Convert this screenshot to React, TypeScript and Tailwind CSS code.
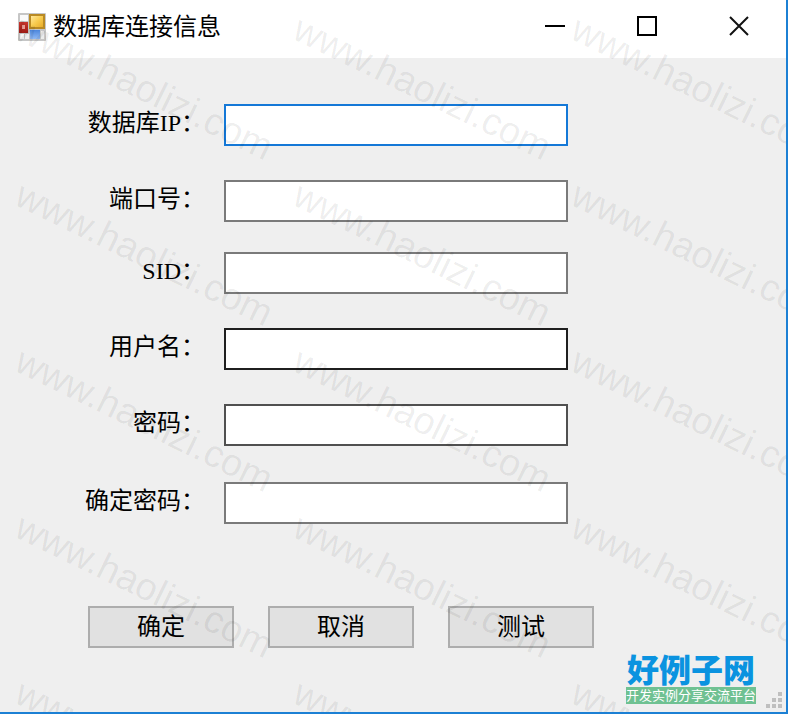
import { useState } from 'react'
import { clsx } from 'clsx'

const FIELDS = [
  { id: 'ip', label: '数据库IP：', type: 'text', space: '', border: 'border-[#1478d7]' },
  { id: 'port', label: '端口号：', type: 'text', space: 'mt-[34px]', border: 'border-[#7a7a7a]' },
  { id: 'sid', label: 'SID：', type: 'text', space: 'mt-[30px]', border: 'border-[#7a7a7a]' },
  { id: 'user', label: '用户名：', type: 'text', space: 'mt-[34px]', border: 'border-[#1f1f1f]' },
  { id: 'password', label: '密码：', type: 'password', space: 'mt-[34px]', border: 'border-[#505050]' },
  { id: 'confirm', label: '确定密码：', type: 'password', space: 'mt-[36px]', border: 'border-[#7a7a7a]' },
]

const ACTIONS = ['确定', '取消', '测试']

function AppIcon() {
  return (
    <svg width="30" height="30" viewBox="0 0 30 30" aria-hidden="true">
      <defs>
        <linearGradient id="gold" x1="0" y1="0" x2="1" y2="1">
          <stop offset="0" stopColor="#ffe79a" />
          <stop offset="0.5" stopColor="#f8cc50" />
          <stop offset="1" stopColor="#e8ac28" />
        </linearGradient>
        <linearGradient id="red" x1="0" y1="0" x2="0" y2="1">
          <stop offset="0" stopColor="#c8362e" />
          <stop offset="1" stopColor="#9e1c16" />
        </linearGradient>
        <linearGradient id="blue" x1="0" y1="0" x2="0" y2="1">
          <stop offset="0" stopColor="#4c86dc" />
          <stop offset="1" stopColor="#8fb9f5" />
        </linearGradient>
      </defs>
      <rect x="1" y="1" width="28" height="28" rx="1" fill="#c6c6c6" />
      <rect x="3" y="3" width="8" height="6" fill="#fafafa" />
      <rect x="3" y="22" width="4" height="5" fill="#f8f8f8" />
      <rect x="8" y="22" width="4" height="5" fill="#f0f0f0" />
      <rect x="24" y="19" width="3" height="8" fill="#ececec" />
      <rect x="12" y="2" width="16" height="15" fill="#b98a24" />
      <rect x="14" y="4" width="12" height="11" fill="url(#gold)" />
      <rect x="2" y="10" width="9" height="11" fill="url(#red)" />
      <rect x="5" y="13" width="3" height="4" fill="#e89a92" />
      <rect x="13" y="18" width="10" height="9" fill="url(#blue)" />
    </svg>
  )
}

function TitleBar() {
  const button = 'flex h-[52px] w-[92px] items-center justify-center'
  return (
    <header className="flex h-[58px] items-start justify-between bg-white pl-[17px] pr-px">
      <div className="flex h-[54px] items-center gap-1.5">
        <AppIcon />
        <h1 className="text-2xl leading-6">数据库连接信息</h1>
      </div>
      <div className="flex">
        <button type="button" aria-label="最小化" className={button}>
          <svg width="20" height="20" viewBox="0 0 20 20">
            <path d="M0 10H20" stroke="#000" strokeWidth="2" />
          </svg>
        </button>
        <button type="button" aria-label="最大化" className={button}>
          <svg width="20" height="20" viewBox="0 0 20 20">
            <rect x="1" y="1" width="18" height="18" fill="none" stroke="#000" strokeWidth="2" />
          </svg>
        </button>
        <button type="button" aria-label="关闭" className={button}>
          <svg width="20" height="20" viewBox="0 0 20 20">
            <path d="M1 1L19 19M19 1L1 19" stroke="#111" strokeWidth="2" />
          </svg>
        </button>
      </div>
    </header>
  )
}

// Tiled site mark that lies over the whole window
function Watermark() {
  return (
    <div
      aria-hidden="true"
      className="pointer-events-none absolute inset-0 grid auto-rows-[166px] grid-cols-[repeat(3,278px)] overflow-hidden pl-[27px] pt-2"
    >
      {Array.from({ length: 15 }, (_, i) => (
        <span
          key={i}
          className="origin-top-left rotate-[26deg] whitespace-nowrap font-['Liberation_Sans',sans-serif] text-[38px] leading-10 text-black/7"
        >
          www.haolizi.com
        </span>
      ))}
    </div>
  )
}

function SiteLogo() {
  return (
    <div className="w-[130px] text-center">
      <p className="text-[32px] font-black leading-8 text-[#0a93e0]">好例子网</p>
      <p className="bg-[#6fc192] text-[13px] leading-[17px] text-white">开发实例分享交流平台</p>
    </div>
  )
}

function SizeGrip() {
  return (
    <svg width="16" height="16" viewBox="0 0 16 16" fill="#bfbfbf" aria-hidden="true">
      <path d="M12 0h4v4h-4zM6 6h4v4H6zM12 6h4v4h-4zM0 12h4v4H0zM6 12h4v4H6zM12 12h4v4h-4z" />
    </svg>
  )
}

export default function App() {
  const [values, setValues] = useState<Record<string, string>>({})

  return (
    <div className="relative flex min-h-screen flex-col border-b-2 border-r-2 border-[#1c80d4] bg-[#efefef] font-['Liberation_Serif','Noto_Sans_CJK_SC',sans-serif] text-black">
      <TitleBar />
      <form className="flex-1 pt-[46px]" onSubmit={(e) => e.preventDefault()}>
        {FIELDS.map((f) => (
          <div key={f.id} className={clsx('flex items-center gap-[19px]', f.space)}>
            <label htmlFor={f.id} className="w-[205px] pb-1 text-right text-2xl leading-6">
              {f.label}
            </label>
            <input
              id={f.id}
              type={f.type}
              value={values[f.id] ?? ''}
              onChange={(e) => setValues({ ...values, [f.id]: e.target.value })}
              className={clsx('h-[42px] w-[344px] border-2 bg-white px-2 text-2xl outline-none', f.border)}
            />
          </div>
        ))}
        <div className="mt-[82px] flex gap-[34px] pl-[88px]">
          {ACTIONS.map((a) => (
            <button
              key={a}
              type="submit"
              className="h-[42px] w-[146px] border-2 border-[#adadad] bg-[#e1e1e1] text-2xl leading-6"
            >
              {a}
            </button>
          ))}
        </div>
      </form>
      <footer className="flex items-end justify-end gap-2.5 pb-1 pr-1">
        <div className="pb-1">
          <SiteLogo />
        </div>
        <SizeGrip />
      </footer>
      <Watermark />
    </div>
  )
}
